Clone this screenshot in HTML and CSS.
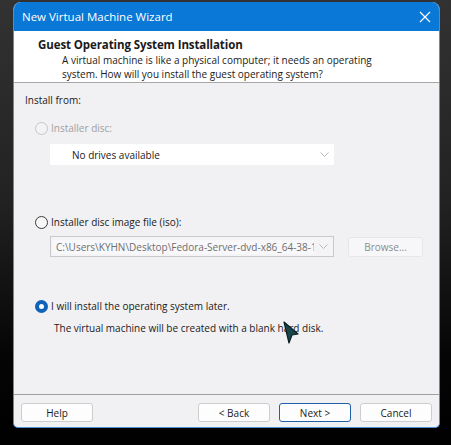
FILE: index.html
```html
<!DOCTYPE html>
<html>
<head>
<meta charset="utf-8">
<link rel="stylesheet" href="styles.css">
</head>
<body>
<div class="window">
  <div class="titlebar">
    <span class="title">New Virtual Machine Wizard</span>
    <svg class="close" width="12" height="12" viewBox="0 0 12 12"><path d="M1 1 L11 11 M11 1 L1 11" stroke="#fff" stroke-width="1.2" fill="none"/></svg>
  </div>
  <div class="header">
    <div class="h-title">Guest Operating System Installation</div>
    <div class="h-sub">A virtual machine is like a physical computer; it needs an operating<br>system. How will you install the guest operating system?</div>
  </div>
  <div class="content">
    <div class="label">Install from:</div>
    <div class="radio-row r1 disabled"><span class="radio"></span><span>Installer disc:</span></div>
    <div class="select s1"><span class="sel-text">No drives available</span><svg class="chev" width="9" height="5" viewBox="0 0 9 5"><path d="M0.5 0.5 L4.5 4.5 L8.5 0.5" stroke="#b8b8b8" fill="none"/></svg></div>
    <div class="radio-row r2"><span class="radio"></span><span>Installer disc image file (iso):</span></div>
    <div class="iso-row">
      <div class="select s2"><span class="sel-text gray">C:\Users\KYHN\Desktop\Fedora-Server-dvd-x86_64-38-1.6.iso</span><svg class="chev" width="9" height="5" viewBox="0 0 9 5"><path d="M0.5 0.5 L4.5 4.5 L8.5 0.5" stroke="#b8b8b8" fill="none"/></svg></div>
      <div class="browse">Browse...</div>
    </div>
    <div class="radio-row r3"><span class="radio checked"></span><span>I will install the operating system later.</span></div>
    <div class="desc">The virtual machine will be created with a blank hard disk.</div>
    <svg class="cursor" width="18" height="26" viewBox="0 0 18 26"><path d="M2 2 L16 14 L10 15 L7 23 Z" fill="#17474b" stroke="#0b1f22" stroke-width="1.2" stroke-linejoin="round"/></svg>
  </div>
  <div class="footer">
    <div class="btn">Help</div>
    <div class="spacer"></div>
    <div class="btn">&lt; Back</div>
    <div class="btn primary">Next &gt;</div>
    <div class="btn">Cancel</div>
  </div>
</div>
</body>
</html>
```
FILE: styles.css
```css
html, body {
  margin: 0;
  padding: 0;
}
body {
  width: 451px;
  height: 445px;
  overflow: hidden;
  background: linear-gradient(to bottom, #323232 0%, #222 45%, #050505 80%, #000 100%);
  font-family: "Open Sans", "Noto Sans", sans-serif;
  font-size: 10px;
  color: #1a1a1a;
}
.window {
  margin-left: 13px;
  margin-top: 2px;
  width: 427px;
  height: 426px;
  box-sizing: border-box;
  border-radius: 8px 8px 5px 5px;
  border: 1px solid #4c8fd6;
  border-top: none;
  background: #f1f0f3;
  display: flex;
  flex-direction: column;
  overflow: hidden;
  position: relative;
}
.titlebar {
  height: 29px;
  background: #0a78d6;
  color: #fff;
  display: flex;
  align-items: center;
  padding-left: 8px;
  padding-right: 8px;
  font-size: 11.5px;
}
.title { flex: 1; }
.header {
  height: 52px;
  background: #fff;
  border-bottom: 1px solid #a7a7a7;
  box-sizing: border-box;
  padding-top: 6px;
  padding-left: 24px;
}
.h-title {
  font-weight: bold;
  font-size: 11.5px;
  line-height: 16px;
  letter-spacing: -0.1px;
}
.h-sub {
  margin-left: 24px;
  line-height: 14px;
  white-space: nowrap;
}
.content {
  flex: 1;
  padding-left: 11px;
  display: flex;
  flex-direction: column;
  align-items: flex-start;
  position: relative;
}
.label { margin-top: 9px; line-height: 16px; }
.radio-row {
  display: flex;
  align-items: center;
  line-height: 16px;
  margin-left: 10px;
  gap: 3px;
}
.r1 { margin-top: 12px; }
.r2 { margin-top: 49px; }
.r3 { margin-top: 41px; }
.radio {
  width: 13px;
  height: 13px;
  box-sizing: border-box;
  border-radius: 50%;
  border: 1px solid #3b3b3b;
  background: #f7f7f7;
}
.disabled { color: #a0a0a0; }
.disabled .radio { border-color: #c6c6c6; background: #f3f3f3; }
.radio.checked {
  border: 4px solid #0f62b8;
  background: #fff;
}
.select {
  width: 284px;
  height: 21px;
  box-sizing: border-box;
  display: flex;
  align-items: center;
  background: #fff;
  margin-left: 25px;
}
.s1 { margin-top: 8px; padding-left: 22px; padding-right: 5px; }
.s2 {
  margin-left: 0;
  border: 1px solid #c9c9cc;
  background: #f4f4f6;
  padding-left: 2px;
  padding-right: 5px;
}
.sel-text {
  flex: 1;
  white-space: nowrap;
  overflow: hidden;
}
.gray {
  color: #6e6e6e;
  background: #f8f8fa;
  padding-left: 3px;
  margin-right: 5px;
}
.iso-row {
  display: flex;
  margin-top: 6px;
  margin-left: 25px;
  gap: 14px;
}
.browse {
  width: 75px;
  height: 20px;
  box-sizing: border-box;
  border: 1px solid #e6e6e8;
  border-radius: 3px;
  background: #f7f7f9;
  color: #8c8c8c;
  display: flex;
  align-items: center;
  justify-content: center;
  margin-top: 1px;
}
.desc {
  margin-top: 6px;
  margin-left: 29px;
  line-height: 16px;
}
.cursor {
  position: absolute;
  left: 268px;
  top: 237px;
}
.footer {
  height: 33px;
  border-top: 1px solid #a0a0a0;
  box-sizing: border-box;
  display: flex;
  align-items: flex-start;
  padding-top: 8px;
  padding-left: 7px;
  padding-right: 7px;
  gap: 9px;
}
.spacer { flex: 1; }
.btn {
  width: 72px;
  height: 19px;
  box-sizing: border-box;
  border: 1px solid #cdcdcd;
  border-radius: 3px;
  background: #fdfdfd;
  display: flex;
  align-items: center;
  justify-content: center;
}
.btn.primary { border-color: #1f5fa8; }
```
